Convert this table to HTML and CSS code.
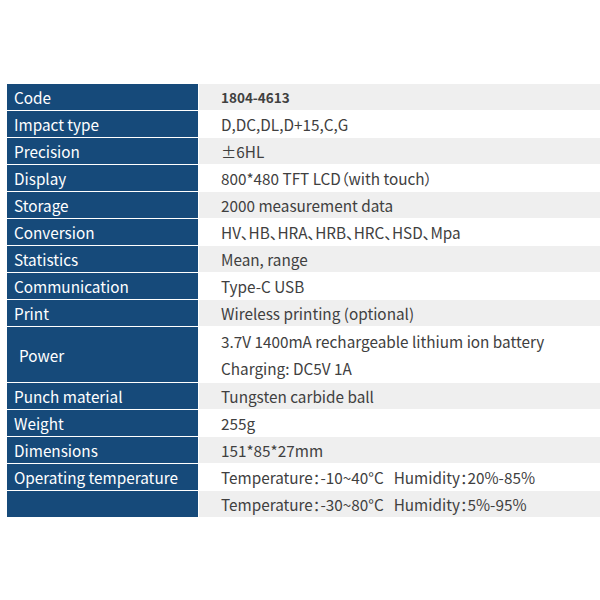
FILE: index.html
```html
<!DOCTYPE html>
<html>
<head>
<meta charset="utf-8">
<link rel="stylesheet" href="styles.css">
</head>
<body>
<div class="spec">
  <div class="row gray"><div class="label">Code</div><div class="value bold">1804-4613</div></div>
  <div class="row"><div class="label">Impact type</div><div class="value">D,DC,DL,D+15,C,G</div></div>
  <div class="row gray"><div class="label">Precision</div><div class="value">±6HL</div></div>
  <div class="row"><div class="label">Display</div><div class="value">800*480 TFT LCD（with touch）</div></div>
  <div class="row gray"><div class="label">Storage</div><div class="value">2000 measurement data</div></div>
  <div class="row"><div class="label">Conversion</div><div class="value">HV、HB、HRA、HRB、HRC、HSD、Mpa</div></div>
  <div class="row gray"><div class="label">Statistics</div><div class="value">Mean, range</div></div>
  <div class="row"><div class="label">Communication</div><div class="value">Type-C USB</div></div>
  <div class="row gray"><div class="label">Print</div><div class="value">Wireless printing (optional)</div></div>
  <div class="row tall"><div class="label indent">Power</div><div class="value multi"><span>3.7V 1400mA rechargeable lithium ion battery</span><span>Charging: DC5V 1A</span></div></div>
  <div class="row gray"><div class="label">Punch material</div><div class="value">Tungsten carbide ball</div></div>
  <div class="row"><div class="label">Weight</div><div class="value">255g</div></div>
  <div class="row gray"><div class="label">Dimensions</div><div class="value">151*85*27mm</div></div>
  <div class="row"><div class="label">Operating temperature</div><div class="value">Temperature：-10~40°C<span class="sep"></span>Humidity：20%-85%</div></div>
  <div class="row gray"><div class="label"></div><div class="value">Temperature：-30~80°C<span class="sep"></span>Humidity：5%-95%</div></div>
</div>
</body>
</html>
```
FILE: styles.css
```css
html, body {
  margin: 0;
  padding: 0;
  background: #ffffff;
}
body {
  font-family: "Noto Sans CJK SC", "Noto Sans", sans-serif;
  padding: 84px 0 0 7px;
}
.spec {
  display: flex;
  flex-direction: column;
  gap: 1px;
  background: #ffffff;
}
.row {
  display: grid;
  grid-template-columns: 192px 1fr;
  height: 26px;
}
.row.tall {
  height: 55px;
}
.label {
  background: #164a7a;
  color: #ffffff;
  font-size: 15.3px;
  padding-left: 7px;
  display: flex;
  align-items: center;
  margin-right: 1px;
}
.label.indent {
  padding-left: 12px;
}
.value {
  background: #ffffff;
  color: #404040;
  font-size: 15.3px;
  padding-left: 22px;
  display: flex;
  align-items: center;
  white-space: nowrap;
  font-feature-settings: "palt";
}
.sep {
  display: inline-block;
  width: 10px;
}
.row.gray .value {
  background: #efefef;
}
.value.bold {
  font-weight: bold;
  font-size: 13.5px;
}
.value.multi {
  flex-direction: column;
  align-items: flex-start;
  justify-content: center;
  gap: 2px;
  line-height: 25px;
}
```
